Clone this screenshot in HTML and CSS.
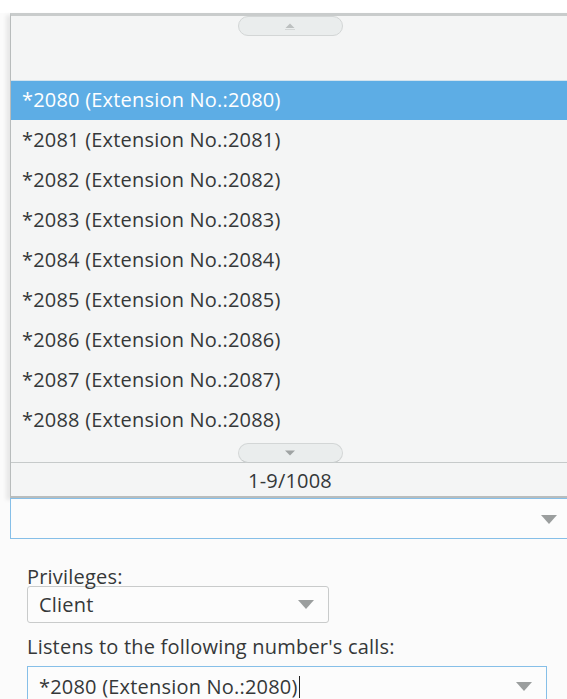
FILE: index.html
```html
<!DOCTYPE html>
<html lang="en">
<head>
<meta charset="utf-8">
<title>Extension listener</title>
<link rel="stylesheet" href="styles.css">
</head>
<body>
<div class="page">
  <div class="combo">
    <div class="listbox">
      <div class="scroll-top">
        <button class="pill" type="button" aria-label="Scroll up">
          <svg width="14" height="8" viewBox="0 0 14 8"><path d="M2.5 6 L7 1.5 L11.5 6 Z" fill="#bcc0c0"/><rect x="2" y="7" width="10" height="1" fill="#d3d6d6"/></svg>
        </button>
      </div>
      <ul class="options">
        <li class="option selected">*2080 (Extension No.:2080)</li>
        <li class="option">*2081 (Extension No.:2081)</li>
        <li class="option">*2082 (Extension No.:2082)</li>
        <li class="option">*2083 (Extension No.:2083)</li>
        <li class="option">*2084 (Extension No.:2084)</li>
        <li class="option">*2085 (Extension No.:2085)</li>
        <li class="option">*2086 (Extension No.:2086)</li>
        <li class="option">*2087 (Extension No.:2087)</li>
        <li class="option">*2088 (Extension No.:2088)</li>
      </ul>
      <div class="scroll-bottom">
        <button class="pill" type="button" aria-label="Scroll down">
          <svg width="14" height="8" viewBox="0 0 14 8"><path d="M2 1.5 L12 1.5 L7 6.5 Z" fill="#9fa3a3"/></svg>
        </button>
      </div>
      <div class="pager">1-9/1008</div>
    </div>
    <div class="select focus wide">
      <span class="value"></span>
      <span class="caret"></span>
    </div>
  </div>

  <div class="field first">
    <label class="label">Privileges:</label>
    <div class="select small">
      <span class="value">Client</span>
      <span class="caret"></span>
    </div>
  </div>

  <div class="field second">
    <label class="label">Listens to the following number's calls:</label>
    <div class="select focus medium">
      <span class="value">*2080 (Extension No.:2080)<span class="cursor"></span></span>
      <span class="caret"></span>
    </div>
  </div>
</div>
</body>
</html>
```

FILE: styles.css
```css
* { box-sizing: border-box; }

html, body {
  margin: 0;
  padding: 0;
}

body {
  background: #fbfbfb;
  font-family: "Open Sans", "DejaVu Sans", sans-serif;
  font-size: 20px;
  letter-spacing: 0.2px;
  color: #353839;
  overflow: hidden;
}

.page {
  background: linear-gradient(#ffffff, #ffffff) top / 100% 13px no-repeat;
  padding-top: 13px;
}

/* dropdown list opened above its select */
.combo {
  margin-left: 10px;
  width: 580px;
}

.listbox {
  background: #f4f5f5;
  border-top: 3px solid #c9cccc;
  border-left: 1px solid #b8bcbc;
  box-shadow: -4px 2px 4px rgba(0, 0, 0, 0.08);
}

.scroll-top {
  height: 64px;
  display: flex;
  justify-content: center;
  align-items: flex-start;
  padding-right: 21px;
}

.pill {
  width: 105px;
  height: 20px;
  border: 1px solid #d3d6d6;
  border-radius: 10px;
  background: #eaeded;
  padding: 0;
  display: flex;
  align-items: center;
  justify-content: center;
}

.options {
  list-style: none;
  margin: 0;
  padding: 0;
}

.option {
  height: 40px;
  line-height: 40px;
  padding-left: 11px;
  white-space: nowrap;
}

.option.selected {
  background: #5dade5;
  color: #ffffff;
  border-top: 1px solid #d2e3ee;
  line-height: 38px;
}

.scroll-bottom {
  height: 23px;
  display: flex;
  justify-content: center;
  align-items: flex-end;
  padding-right: 21px;
  border-bottom: 1px solid #c6caca;
}

.scroll-bottom .pill {
  margin-bottom: -1px;
  border-bottom-color: #c6caca;
}

.pager {
  height: 35px;
  line-height: 35px;
  text-align: center;
  padding-right: 21px;
  border-bottom: 2px solid #b9bdbd;
}

.select {
  display: flex;
  align-items: center;
  justify-content: space-between;
  background: #fcfcfc;
  border: 1px solid #c9cbcb;
  border-radius: 3px;
}

.select.focus {
  border-color: #86bfe8;
  border-radius: 0;
}

.select.wide {
  height: 41px;
  padding-right: 32px;
}

.select.wide .caret {
  margin-top: 2px;
}

.value {
  padding-left: 11px;
  white-space: nowrap;
}

.caret {
  width: 0;
  height: 0;
  border-left: 8px solid transparent;
  border-right: 8px solid transparent;
  border-top: 9px solid #9b9e9e;
}

.field {
  padding-left: 27px;
}

.label {
  display: block;
  height: 20px;
  line-height: 20px;
  margin-bottom: 1px;
}

.field.first {
  margin-top: 28px;
}

.field.first .label {
  margin-bottom: -1px;
}

.field.second {
  margin-top: 14px;
}

.field.second .label {
  margin-bottom: 9px;
}

.select.small {
  width: 302px;
  height: 37px;
  padding-right: 14px;
}

.select.medium {
  width: 520px;
  height: 40px;
  padding-right: 14px;
}

.cursor {
  display: inline-block;
  width: 1px;
  height: 22px;
  background: #222;
  vertical-align: -4px;
  margin-left: 1px;
}
```
